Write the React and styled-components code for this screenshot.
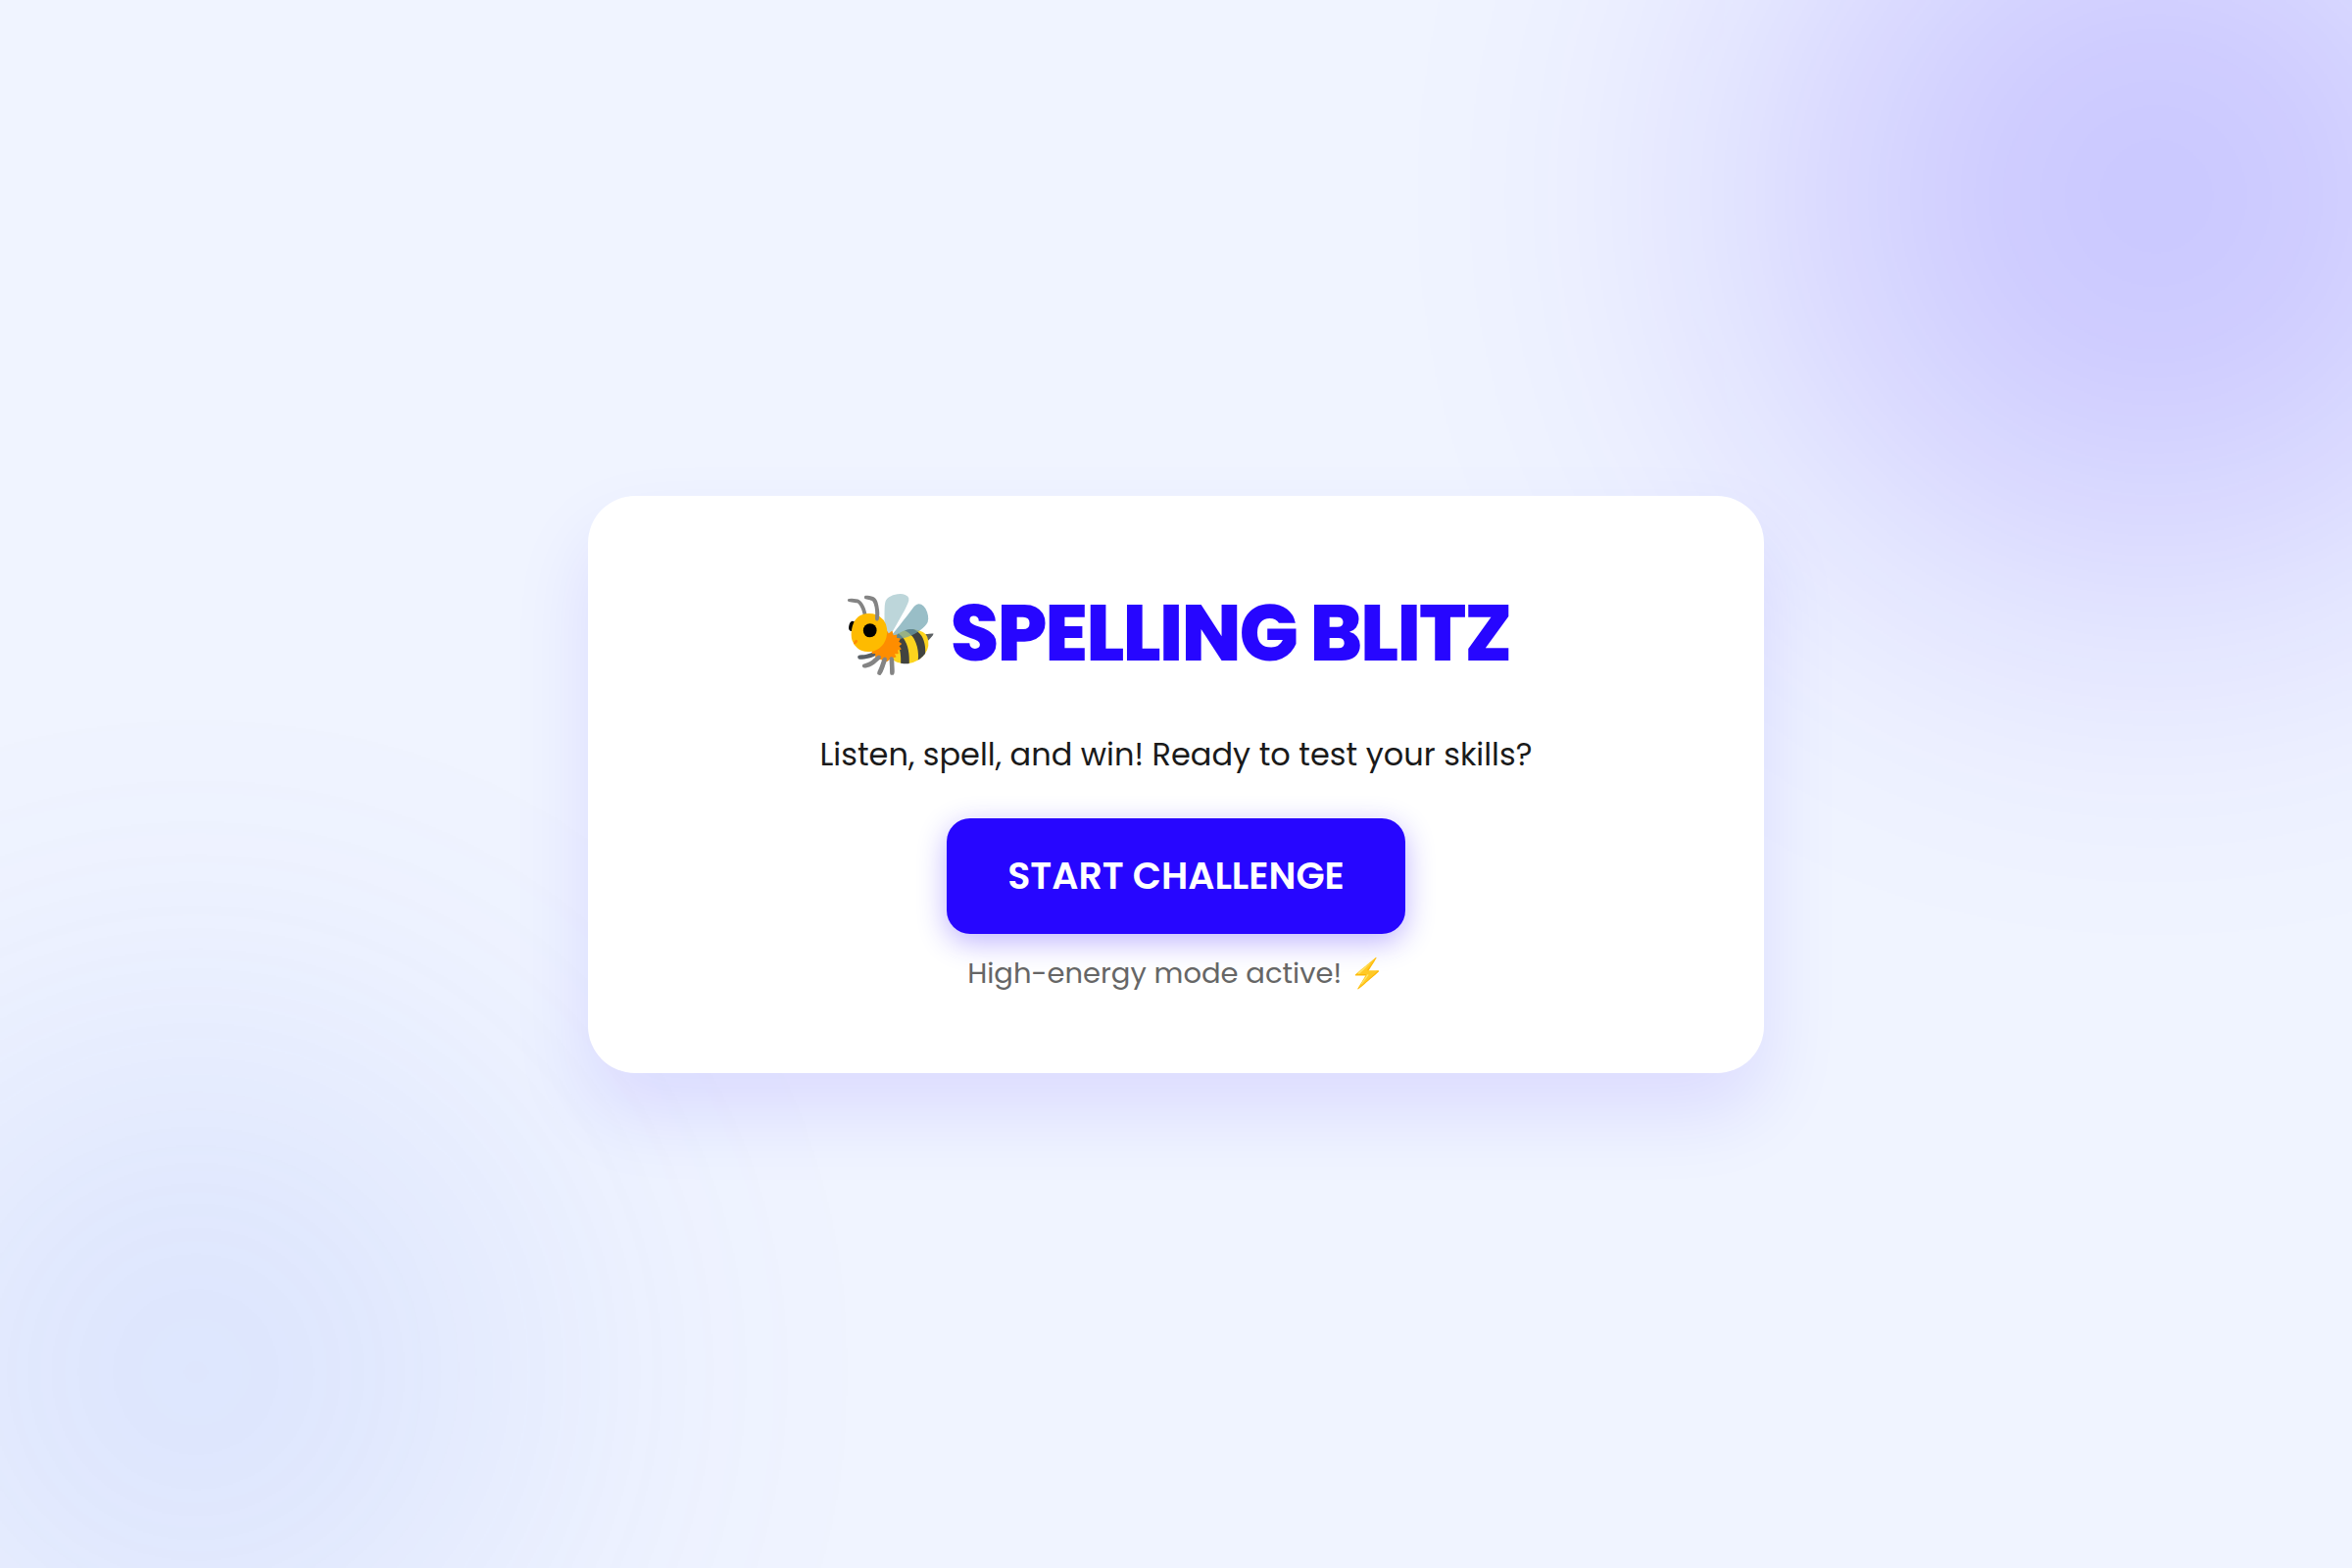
import React from "react";
import styled, { createGlobalStyle } from "styled-components";

const GlobalStyle = createGlobalStyle`
  *, *::before, *::after { box-sizing: border-box; }
  body {
    margin: 0;
    background: #f0f4ff;
    color: #1a1a1a;
    font-family: Poppins, Inter, "Noto Sans", sans-serif;
  }
`;

const Page = styled.main`
  position: relative;
  display: flex;
  align-items: center;
  justify-content: center;
  min-height: 100vh;
  padding: 40px;
  overflow: hidden;
`;

const Glow = styled.div`
  position: absolute;
  width: ${(p) => p.$size}px;
  height: ${(p) => p.$size}px;
  border-radius: 50%;
  background: ${(p) => p.$color};
  opacity: ${(p) => p.$strength};
  filter: blur(200px);
  pointer-events: none;
`;

const TopGlow = styled(Glow)`
  top: -200px;
  right: -200px;
`;

const BottomGlow = styled(Glow)`
  bottom: -150px;
  left: -150px;
`;

const Card = styled.section`
  position: relative;
  display: flex;
  flex-direction: column;
  align-items: center;
  width: 100%;
  max-width: 1200px;
  padding: 80px;
  border-radius: 48px;
  background: #ffffff;
  box-shadow: 0 40px 80px rgba(39, 6, 255, 0.1);
  text-align: center;
`;

const Title = styled.h1`
  margin: 0 0 38px;
  color: #2706ff;
  font-size: 80px;
  font-weight: 800;
  line-height: 120px;
  letter-spacing: -2px;
`;

const Lead = styled.p`
  margin: 0 0 39px;
  font-size: 32px;
  line-height: 52px;
`;

const StartButton = styled.button`
  margin: 0 0 19px;
  padding: 29px 62px;
  border: 0;
  border-radius: 24px;
  background: #2706ff;
  box-shadow: 0 8px 30px rgba(39, 6, 255, 0.3);
  color: #ffffff;
  font-family: inherit;
  font-size: 38px;
  font-weight: 600;
  line-height: 60px;
  cursor: pointer;
`;

const Note = styled.p`
  margin: 0;
  color: #666666;
  font-size: 29px;
  line-height: 43px;
`;

export default function App() {
  return (
    <>
      <GlobalStyle />
      <Page>
        <TopGlow $size={800} $color="#2706ff" $strength={0.2} />
        <BottomGlow $size={700} $color="#3f6cee" $strength={0.12} />
        <Card>
          <Title>🐝 SPELLING BLITZ</Title>
          <Lead>Listen, spell, and win! Ready to test your skills?</Lead>
          <StartButton type="button">START CHALLENGE</StartButton>
          <Note>High-energy mode active! ⚡</Note>
        </Card>
      </Page>
    </>
  );
}
